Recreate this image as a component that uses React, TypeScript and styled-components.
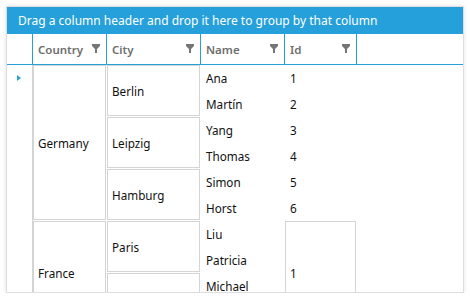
import React from 'react'
import styled, {createGlobalStyle} from 'styled-components'

const ACCENT = '#25a0da'
const CELL_BORDER = '#d4d4d4'

interface IRow {
    country: string
    city: string
    name: string
    id: number
}

const ROWS: IRow[] = [
    {country: 'Germany', city: 'Berlin', name: 'Ana', id: 1},
    {country: 'Germany', city: 'Berlin', name: 'Martín', id: 2},
    {country: 'Germany', city: 'Leipzig', name: 'Yang', id: 3},
    {country: 'Germany', city: 'Leipzig', name: 'Thomas', id: 4},
    {country: 'Germany', city: 'Hamburg', name: 'Simon', id: 5},
    {country: 'Germany', city: 'Hamburg', name: 'Horst', id: 6},
    {country: 'France', city: 'Paris', name: 'Liu', id: 1},
    {country: 'France', city: 'Paris', name: 'Patricia', id: 1},
    {country: 'France', city: 'Lyon', name: 'Michael', id: 1},
    {country: 'France', city: 'Lyon', name: 'Laura', id: 1},
]

const COLUMNS = ['Country', 'City', 'Name', 'Id']

// groups consecutive equal values into merged spans
const mergeBy = (field: keyof IRow) => {
    const spans: {value: string, start: number, span: number}[] = []
    ROWS.forEach((row, index) => {
        const value = String(row[field])
        const last = spans[spans.length - 1]
        const sameParent = field !== 'id' || (last && ROWS[last.start].country === row.country)
        if (last && last.value === value && sameParent) {
            last.span++
        } else {
            spans.push({value, start: index, span: 1})
        }
    })
    return spans
}

const FilterIcon = () => (
    <svg width="8" height="9" viewBox="0 0 8 9">
        <path d="M0 0H8V2L5 5V9H3V5L0 2Z" fill="#767676"/>
    </svg>
)

export default function App() {
    const countries = mergeBy('country')
    const cities = mergeBy('city')
    const ids = mergeBy('id')

    return (
        <>
            <GlobalStyle/>
            <Grid>
                <GroupPanel>Drag a column header and drop it here to group by that column</GroupPanel>
                <HeaderRow>
                    <HeaderCell/>
                    {COLUMNS.map(col =>
                        <HeaderCell key={col}>
                            <span>{col}</span>
                            <FilterIcon/>
                        </HeaderCell>
                    )}
                    <Filler/>
                </HeaderRow>
                <Body>
                    <Indicator $rows={ROWS.length}>
                        <Arrow/>
                    </Indicator>
                    {countries.map((item, index) =>
                        <Merged key={'c' + index} $col={2} $row={item.start + 1} $span={item.span}>{item.value}</Merged>
                    )}
                    {cities.map((item, index) =>
                        <Merged key={'t' + index} $col={3} $row={item.start + 1} $span={item.span}>{item.value}</Merged>
                    )}
                    {ROWS.map((row, index) =>
                        <Cell key={'n' + index} $col={4} $row={index + 1}>{row.name}</Cell>
                    )}
                    {ids.map((item, index) => item.span > 1
                        ? <Merged key={'i' + index} $col={5} $row={item.start + 1} $span={item.span}>{item.value}</Merged>
                        : <Cell key={'i' + index} $col={5} $row={item.start + 1}>{item.value}</Cell>
                    )}
                </Body>
            </Grid>
        </>
    )
}

const GlobalStyle = createGlobalStyle`
  body {
    margin: 0;
    background: #fff;
    font-family: "Noto Sans", "Open Sans", sans-serif;
  }
`

const Grid = styled.div`
  margin: 6px 0 0 6px;
  width: 458px;
  height: 287px;
  box-sizing: border-box;
  border: 1px solid #dedede;
  box-shadow: 0 0 4px rgba(0, 0, 0, 0.12);
  overflow: hidden;
  display: flex;
  flex-direction: column;
  background: #fff;
`

const GroupPanel = styled.div`
  height: 27px;
  flex-shrink: 0;
  background: ${ACCENT};
  color: #fff;
  font-size: 12px;
  display: flex;
  align-items: center;
  padding-left: 11px;
`

const HeaderRow = styled.div`
  display: grid;
  grid-template-columns: 26px 74px 94px 84px 72px 1fr;
  height: 31px;
  flex-shrink: 0;
  box-sizing: border-box;
  border-bottom: 1px solid ${ACCENT};
`

const HeaderCell = styled.div`
  border-right: 1px solid ${ACCENT};
  display: flex;
  align-items: center;
  justify-content: space-between;
  padding: 0 6px 0 5px;
  font-size: 11.5px;
  font-weight: 600;
  color: #6e6e6e;

  svg {
    margin-top: -2px;
  }
`

const Filler = styled.div``

const Body = styled.div`
  display: grid;
  grid-template-columns: 26px 74px 94px 84px 72px 1fr;
  grid-auto-rows: 26px;
  font-size: 11.7px;
  color: #111;
`

const Indicator = styled.div<{$rows: number}>`
  grid-column: 1;
  grid-row: 1 / span ${p => p.$rows};
  border-right: 1px solid ${CELL_BORDER};
  position: relative;
`

const Arrow = styled.div`
  position: absolute;
  left: 10px;
  top: 10px;
  width: 0;
  height: 0;
  border-top: 3px solid transparent;
  border-bottom: 3px solid transparent;
  border-left: 4px solid ${ACCENT};
`

const Merged = styled.div<{$col: number, $row: number, $span: number}>`
  grid-column: ${p => p.$col};
  grid-row: ${p => p.$row} / span ${p => p.$span};
  margin: 0 1px 1px 0;
  border: 1px solid ${CELL_BORDER};
  display: flex;
  align-items: center;
  padding-left: 4px;
`

const Cell = styled.div<{$col: number, $row: number}>`
  grid-column: ${p => p.$col};
  grid-row: ${p => p.$row};
  display: flex;
  align-items: center;
  padding-left: 5px;
`
